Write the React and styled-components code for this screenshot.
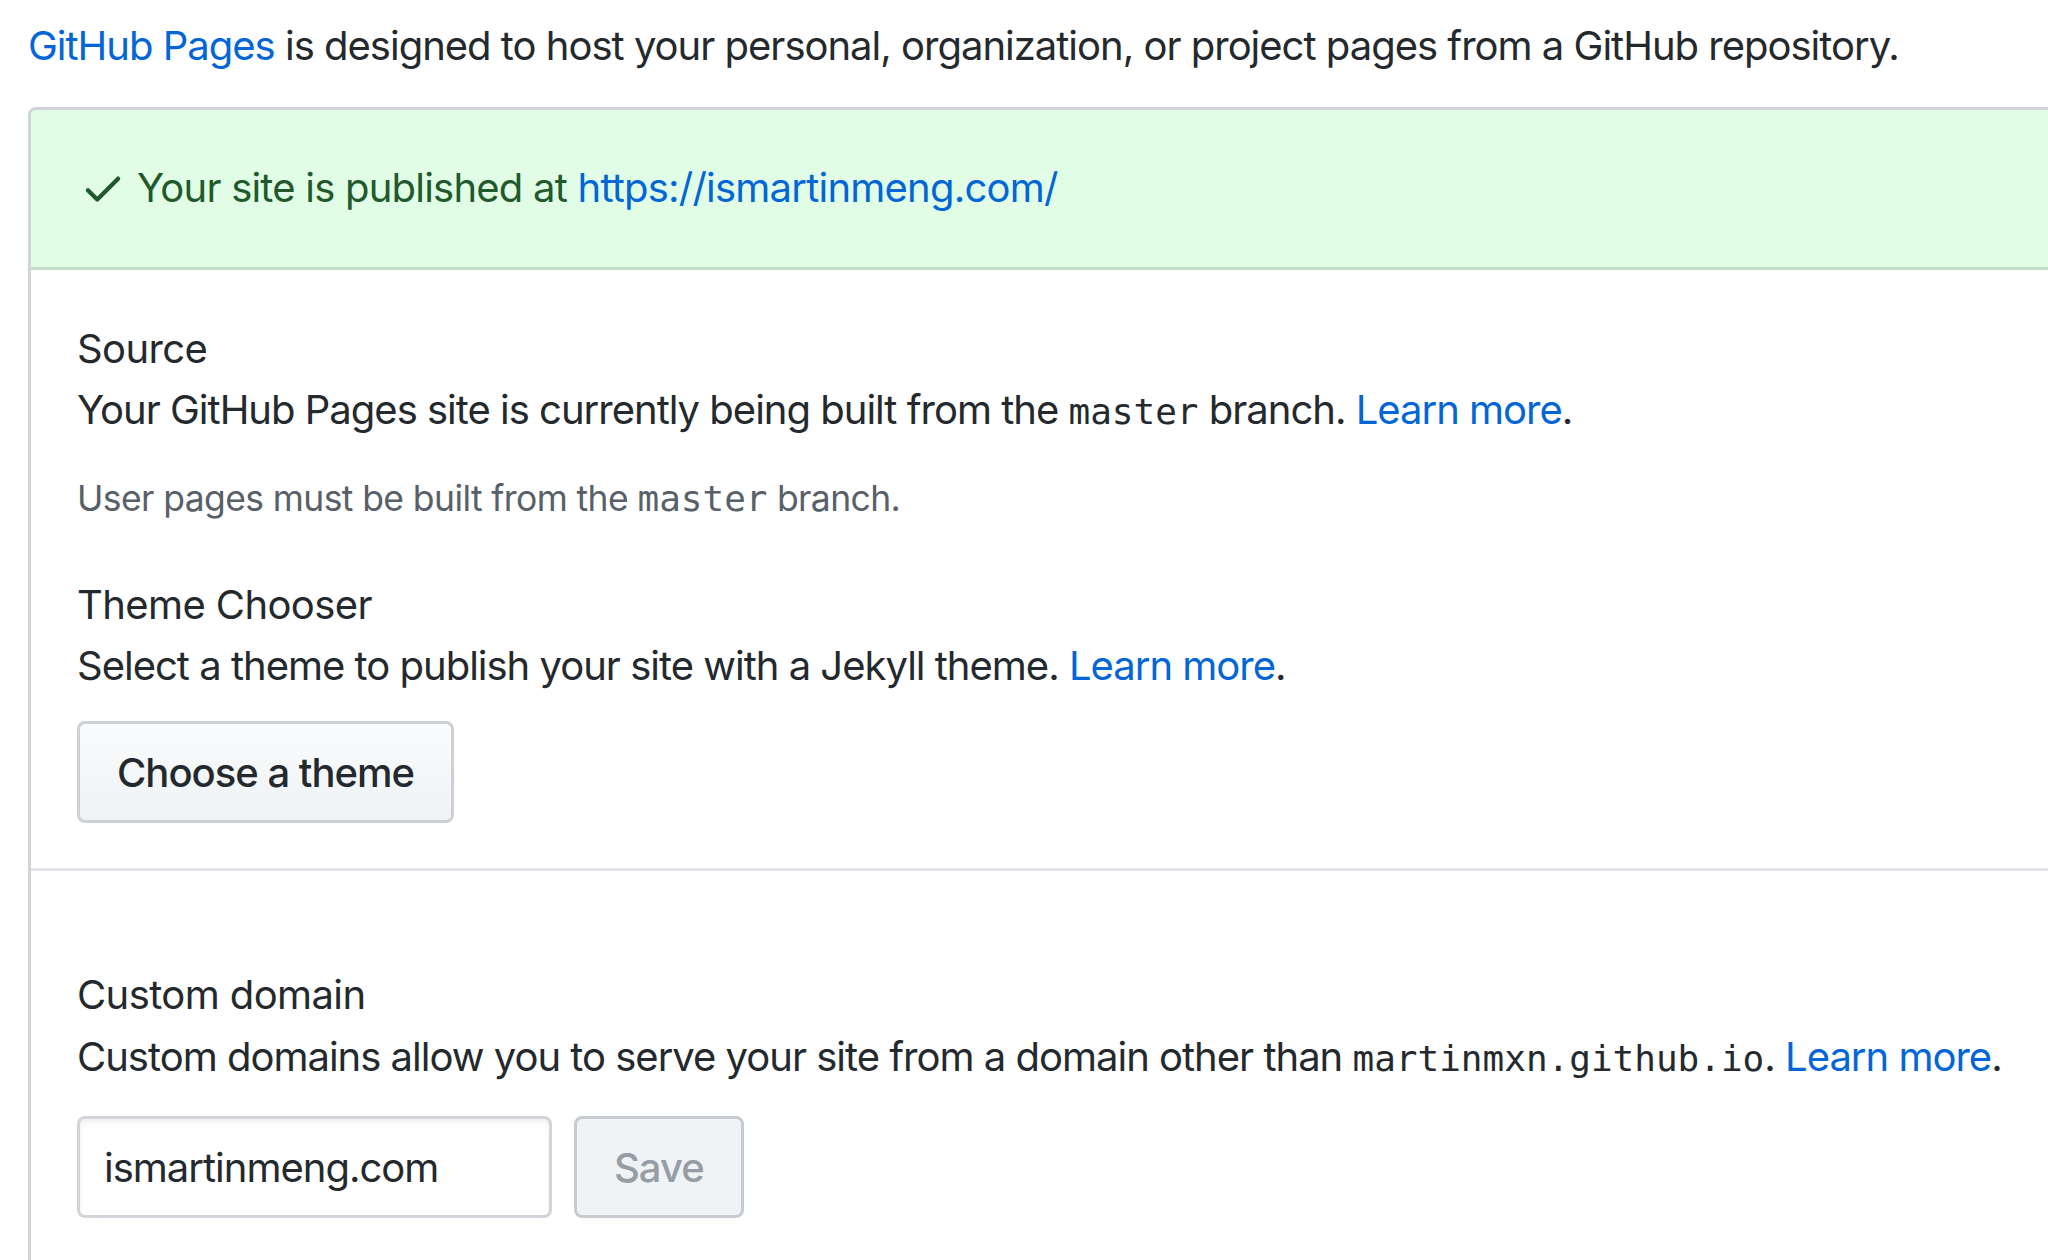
import React from "react";
import styled, { createGlobalStyle } from "styled-components";

const GlobalStyle = createGlobalStyle`
  html, body {
    margin: 0;
    padding: 0;
    background: #ffffff;
    overflow: hidden;
  }
  body {
    font-family: Inter, "Liberation Sans", sans-serif;
    color: #24292e;
    letter-spacing: -1px;
  }
`;

const Page = styled.div`
  width: 2048px;
  height: 1260px;
  overflow: hidden;
  padding-left: 28px;
  box-sizing: border-box;
`;

const Intro = styled.p`
  margin: 0;
  padding-top: 16px;
  font-size: 40px;
  line-height: 60px;
  white-space: nowrap;
`;

const Link = styled.a`
  color: #0366d6;
  text-decoration: none;
`;

const Box = styled.div`
  margin-top: 31px;
  width: 2100px;
  border: 3px solid #d1d5da;
  border-radius: 8px 0 0 0;
  box-sizing: border-box;
  min-height: 1200px;
`;

const Flash = styled.div`
  display: flex;
  align-items: center;
  gap: 11px;
  height: 160px;
  padding-left: 49px;
  padding-bottom: 2px;
  box-sizing: border-box;
  background: #e1fde6;
  border-bottom: 3px solid #c5dfca;
  border-radius: 5px 0 0 0;
  color: #22592c;
  font-size: 40px;
  letter-spacing: -0.78px;
  white-space: nowrap;
`;

const Section = styled.div`
  padding: ${(p) => p.$top}px 46px ${(p) => p.$bottom}px;
  border-bottom: ${(p) => (p.$divider ? "3px solid #e1e4e8" : "none")};
`;

const Heading = styled.h3`
  margin: 0;
  font-size: 40px;
  font-weight: 400;
  line-height: 60px;
  letter-spacing: -0.6px;
`;

const Text = styled.p`
  margin: ${(p) => p.$mt ?? 1}px 0 0;
  font-size: 40px;
  line-height: 60px;
  white-space: nowrap;
`;

const Note = styled.p`
  margin: 32px 0 51px;
  font-size: 35.5px;
  line-height: 50px;
  letter-spacing: -0.6px;
  color: #586069;
  white-space: nowrap;
`;

const Code = styled.code`
  font-family: "DejaVu Sans Mono", "Liberation Mono", monospace;
  font-size: 36px;
  letter-spacing: 0;
`;

const Button = styled.button`
  display: inline-flex;
  align-items: center;
  justify-content: center;
  height: 102px;
  padding: 0 37px;
  font-family: inherit;
  font-size: 40px;
  font-weight: 500;
  letter-spacing: -1px;
  color: ${(p) => (p.disabled ? "#959da5" : "#24292e")};
  background: ${(p) =>
    p.disabled ? "#eff3f6" : "linear-gradient(180deg, #fafbfc, #eff3f6)"};
  border: 3px solid ${(p) => (p.disabled ? "#c8ccd0" : "#cdd0d4")};
  border-radius: 8px;
  box-sizing: border-box;
`;

const ButtonRow = styled.div`
  margin-top: 25px;
`;

const FormRow = styled.div`
  display: flex;
  gap: 22px;
  margin-top: 27px;
`;

const Input = styled.input`
  width: 475px;
  height: 102px;
  padding: 0 24px;
  font-family: inherit;
  font-size: 40px;
  letter-spacing: -1px;
  color: #24292e;
  background: #ffffff;
  border: 3px solid #d1d5da;
  border-radius: 8px;
  box-shadow: inset 0 3px 5px rgba(27, 31, 35, 0.07);
  box-sizing: border-box;
  outline: none;
`;

function CheckIcon() {
  return (
    <svg width="46" height="46" viewBox="0 0 16 16" fill="#22592c">
      <path d="M13.78 4.22a.75.75 0 010 1.06l-7.25 7.25a.75.75 0 01-1.06 0L2.22 9.28a.75.75 0 011.06-1.06L6 10.94l6.72-6.72a.75.75 0 011.06 0z" />
    </svg>
  );
}

export default function App() {
  return (
    <>
      <GlobalStyle />
      <Page>
        <Intro>
          <Link href="#">GitHub Pages</Link> is designed to host your personal,
          organization, or project pages from a GitHub repository.
        </Intro>
        <Box>
          <Flash>
            <CheckIcon />
            <span>
              Your site is published at{" "}
              <Link href="#">https://ismartinmeng.com/</Link>
            </span>
          </Flash>
          <Section $top={49} $bottom={45} $divider>
            <Heading>Source</Heading>
            <Text>
              Your GitHub Pages site is currently being built from the{" "}
              <Code>master</Code> branch. <Link href="#">Learn more</Link>.
            </Text>
            <Note>
              User pages must be built from the <Code>master</Code> branch.
            </Note>
            <Heading>Theme Chooser</Heading>
            <Text>
              Select a theme to publish your site with a Jekyll theme.{" "}
              <Link href="#">Learn more</Link>.
            </Text>
            <ButtonRow>
              <Button>Choose a theme</Button>
            </ButtonRow>
          </Section>
          <Section $top={94} $bottom={40}>
            <Heading>Custom domain</Heading>
            <Text $mt={2}>
              Custom domains allow you to serve your site from a domain other
              than <Code>martinmxn.github.io</Code>.{" "}
              <Link href="#">Learn more</Link>.
            </Text>
            <FormRow>
              <Input defaultValue="ismartinmeng.com" />
              <Button disabled>Save</Button>
            </FormRow>
          </Section>
        </Box>
      </Page>
    </>
  );
}
